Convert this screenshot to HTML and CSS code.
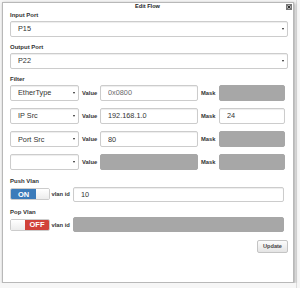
FILE: index.html
```html
<!DOCTYPE html>
<html>
<head>
    <meta charset="UTF-8">
    <title>Edit Flow</title>
    <link rel="stylesheet" href="styles.css">
</head>
<body>
    <div class="dialog">
        <div class="titlebar">
            <span></span>
            <span class="title">Edit Flow</span>
            <button class="close" type="button">
                <svg width="4" height="4" viewBox="0 0 4 4"><path d="M0.5 0.5L3.5 3.5M3.5 0.5L0.5 3.5" stroke="#222" stroke-width="0.9"/></svg>
            </button>
        </div>
        <div class="content">
            <label class="field-label first">Input Port</label>
            <div class="select-wrap">
                <select class="form-control"><option>P15</option></select>
            </div>

            <label class="field-label">Output Port</label>
            <div class="select-wrap">
                <select class="form-control"><option>P22</option></select>
            </div>

            <label class="field-label">Filter</label>
            <div class="filters">
                <div class="filter-row">
                    <div class="select-wrap"><select class="form-control"><option>EtherType</option></select></div>
                    <span class="inline-label">Value</span>
                    <input class="form-control hint" type="text" value="0x0800">
                    <span class="inline-label">Mask</span>
                    <input class="form-control" type="text" disabled>
                </div>
                <div class="filter-row">
                    <div class="select-wrap"><select class="form-control"><option>IP Src</option></select></div>
                    <span class="inline-label">Value</span>
                    <input class="form-control" type="text" value="192.168.1.0">
                    <span class="inline-label">Mask</span>
                    <input class="form-control" type="text" value="24">
                </div>
                <div class="filter-row">
                    <div class="select-wrap"><select class="form-control"><option>Port Src</option></select></div>
                    <span class="inline-label">Value</span>
                    <input class="form-control" type="text" value="80">
                    <span class="inline-label">Mask</span>
                    <input class="form-control" type="text" disabled>
                </div>
                <div class="filter-row">
                    <div class="select-wrap"><select class="form-control"><option></option></select></div>
                    <span class="inline-label">Value</span>
                    <input class="form-control" type="text" disabled>
                    <span class="inline-label">Mask</span>
                    <input class="form-control" type="text" disabled>
                </div>
            </div>

            <label class="field-label vlan-label">Push Vlan</label>
            <div class="vlan-row">
                <div class="switch on">
                    <span class="switch-text">ON</span>
                    <span class="switch-handle"></span>
                </div>
                <span class="inline-label">vlan id</span>
                <input class="form-control" type="text" value="10">
            </div>

            <label class="field-label pop-label">Pop Vlan</label>
            <div class="vlan-row">
                <div class="switch off">
                    <span class="switch-handle"></span>
                    <span class="switch-text">OFF</span>
                </div>
                <span class="inline-label">vlan id</span>
                <input class="form-control" type="text" disabled>
            </div>

            <div class="footer">
                <button class="btn" type="button">Update</button>
            </div>
        </div>
    </div>
</body>
</html>
```

FILE: styles.css
```css
body {
    margin: 0;
    padding: 2px 0 0 2px;
    background: linear-gradient(to right, transparent 296px, #dcdcdc 296px, #dcdcdc 297px, transparent 297px), #f6f6f6;
    font-family: "Liberation Sans", Arial, sans-serif;
    color: #333;
}
.dialog {
    box-sizing: border-box;
    width: 292px;
    height: 281px;
    background: #fff;
    border: 1px solid #b8b8b8;
    box-shadow: 1px 1px 3px rgba(0, 0, 0, 0.35);
}
.titlebar {
    display: grid;
    grid-template-columns: 1fr auto 1fr;
    height: 6px;
    padding-right: 1px;
}
.title {
    font-size: 5.6px;
    font-weight: bold;
    line-height: 6px;
    color: #222;
}
.close {
    justify-self: end;
    box-sizing: border-box;
    width: 6px;
    height: 6px;
    margin-top: 1px;
    padding: 0;
    border: 1px solid #777;
    background: #b0b0b0;
    display: flex;
    align-items: center;
    justify-content: center;
}
.content {
    padding: 2px 5px 0 7px;
}
.field-label {
    display: block;
    font-size: 6px;
    font-weight: bold;
    line-height: 8px;
    margin: 6.5px 0 1.5px;
    color: #333;
}
.field-label.first {
    margin-top: 0;
}
.field-label.vlan-label {
    margin-top: 6.9px;
}
.field-label.pop-label {
    margin-top: 6px;
}
.form-control {
    display: block;
    box-sizing: border-box;
    width: 100%;
    height: 16px;
    margin: 0;
    padding: 0 7px;
    border: 1px solid #ccc;
    border-radius: 2px;
    background: #fff;
    box-shadow: inset 0 1px 1px rgba(0, 0, 0, 0.075);
    font-family: "Liberation Sans", Arial, sans-serif;
    font-size: 7.3px;
    color: #333;
    outline: none;
}
select.form-control {
    -webkit-appearance: none;
    appearance: none;
}
.form-control.hint {
    color: #6a6a6a;
}
.form-control:disabled {
    background: #a7a7a7;
    border-color: #a7a7a7;
    box-shadow: none;
}
.select-wrap {
    position: relative;
}
.select-wrap::after {
    content: "";
    position: absolute;
    right: 4px;
    top: 7px;
    border-left: 1.5px solid transparent;
    border-right: 1.5px solid transparent;
    border-top: 2.5px solid #222;
}
.filters {
    display: flex;
    flex-direction: column;
    gap: 7.3px;
}
.filter-row {
    display: grid;
    grid-template-columns: 69px 15px 98px 15px 66px;
    column-gap: 3px;
    align-items: center;
}
.inline-label {
    font-size: 5.8px;
    font-weight: bold;
    color: #333;
    white-space: nowrap;
}
.vlan-row {
    display: grid;
    grid-template-columns: 40px 20px 211px;
    column-gap: 1.5px;
    align-items: center;
    margin-top: 1.5px;
}
.vlan-row .form-control {
    height: 15px;
}
.switch {
    box-sizing: border-box;
    display: flex;
    height: 12px;
    border: 1px solid #ccc;
    border-radius: 2px;
    overflow: hidden;
}
.switch-text {
    display: flex;
    align-items: center;
    justify-content: center;
    color: #fff;
    font-size: 7.5px;
    font-weight: bold;
}
.switch.on .switch-text {
    width: 25px;
    background: #3a7bba;
}
.switch.off .switch-text {
    width: 24px;
    background: #d1423a;
}
.switch-handle {
    flex: 1;
    background: linear-gradient(#ffffff, #ececec);
}
.footer {
    display: flex;
    justify-content: flex-end;
    margin-top: 7.7px;
}
.btn {
    box-sizing: border-box;
    width: 31px;
    height: 13px;
    padding: 0;
    border: 1px solid #c4c4c4;
    border-radius: 2px;
    background: linear-gradient(#fcfcfc, #e4e4e4);
    font-family: "Liberation Sans", Arial, sans-serif;
    font-size: 5.6px;
    font-weight: bold;
    color: #444;
}
```
